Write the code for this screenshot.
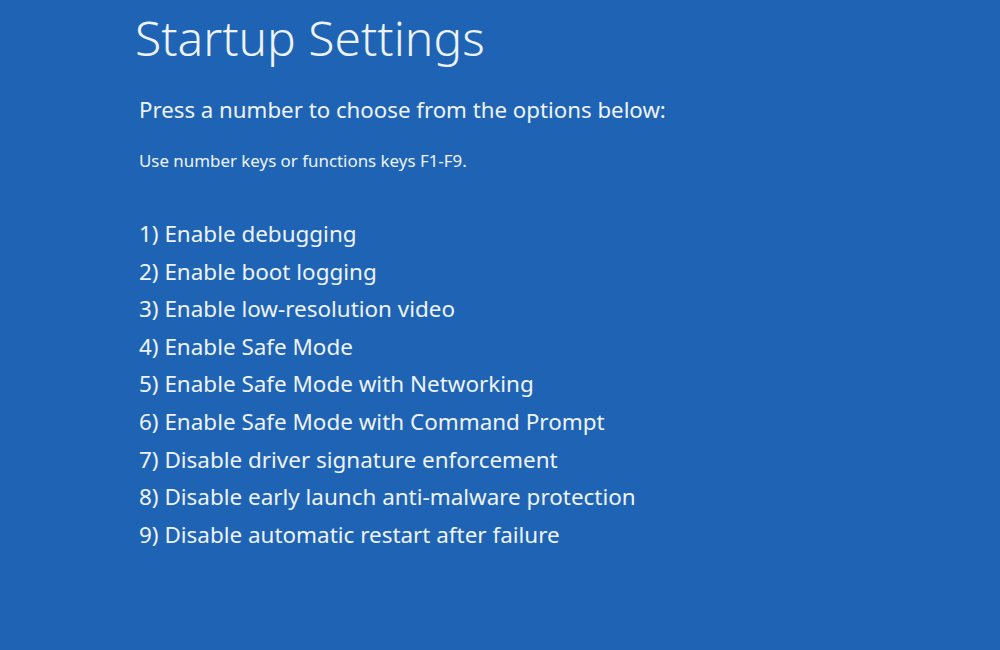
const options = [
  '1) Enable debugging',
  '2) Enable boot logging',
  '3) Enable low-resolution video',
  '4) Enable Safe Mode',
  '5) Enable Safe Mode with Networking',
  '6) Enable Safe Mode with Command Prompt',
  '7) Disable driver signature enforcement',
  '8) Disable early launch anti-malware protection',
  '9) Disable automatic restart after failure',
]

export default function App() {
  return (
    <div className="w-[1000px] h-[650px] overflow-hidden bg-[#1f64b4] text-[#eef3fa] font-['Noto_Sans',sans-serif]">
      <div className="pl-[135px] pt-[6px]">
        <h1 className="text-[48px] font-light leading-[64px]">Startup Settings</h1>
        <p className="pl-[4px] mt-[25px] text-[22.25px] leading-[30px]">Press a number to choose from the options below:</p>
        <p className="pl-[4px] mt-[26px] text-[16.9px] leading-[20px]">Use number keys or functions keys F1-F9.</p>
        <ul className="pl-[4px] mt-[44px]">
          {options.map((o) => (
            <li key={o} className="text-[22.45px] leading-[37.6px]">{o}</li>
          ))}
        </ul>
      </div>
    </div>
  )
}
